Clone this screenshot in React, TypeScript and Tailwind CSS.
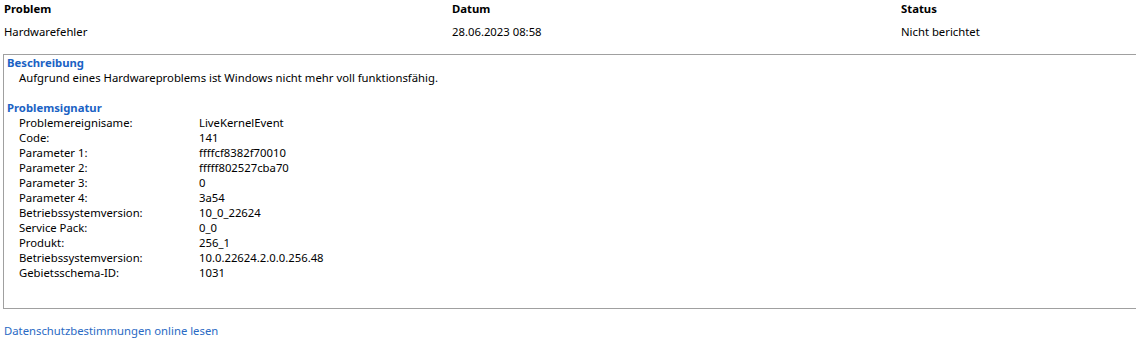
const rows: [string, string][] = [
  ["Problemereignisame:", "LiveKernelEvent"],
  ["Code:", "141"],
  ["Parameter 1:", "ffffcf8382f70010"],
  ["Parameter 2:", "fffff802527cba70"],
  ["Parameter 3:", "0"],
  ["Parameter 4:", "3a54"],
  ["Betriebssystemversion:", "10_0_22624"],
  ["Service Pack:", "0_0"],
  ["Produkt:", "256_1"],
  ["Betriebssystemversion:", "10.0.22624.2.0.0.256.48"],
  ["Gebietsschema-ID:", "1031"],
];

export default function App() {
  return (
    <div
      className="w-[1136px] h-[361px] overflow-hidden bg-white text-black text-[11.3px] leading-[15px]"
      style={{ fontFamily: '"Noto Sans", "Open Sans", sans-serif' }}
    >
      <div className="grid grid-cols-[448px_449px_1fr] pl-[4px] pt-px font-bold">
        <div>Problem</div>
        <div>Datum</div>
        <div>Status</div>
      </div>
      <div className="grid grid-cols-[448px_449px_1fr] pl-[4px] mt-[8px]">
        <div>Hardwarefehler</div>
        <div>28.06.2023 08:58</div>
        <div>Nicht berichtet</div>
      </div>
      <div className="ml-[3px] mt-[15px] h-[255px] border-l border-t border-b border-[#a0a0a0]">
        <div className="pl-[3px] font-bold text-[#1a62c4]">Beschreibung</div>
        <div className="pl-[15px]">
          Aufgrund eines Hardwareproblems ist Windows nicht mehr voll funktionsfähig.
        </div>
        <div className="h-[15px]" />
        <div className="pl-[3px] font-bold text-[#1a62c4]">Problemsignatur</div>
        {rows.map(([k, v], i) => (
          <div key={i} className="flex pl-[15px]">
            <div className="w-[180px] shrink-0">{k}</div>
            <div>{v}</div>
          </div>
        ))}
      </div>
      <div className="pl-[4px] mt-[14px] text-[#2a6ac4]">Datenschutzbestimmungen online lesen</div>
    </div>
  );
}
